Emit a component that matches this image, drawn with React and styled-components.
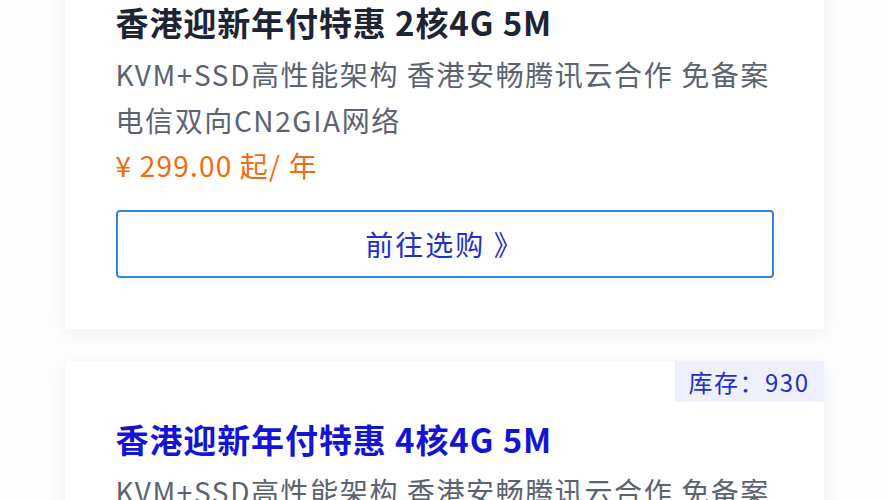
import styled, { createGlobalStyle } from 'styled-components';

const GlobalStyle = createGlobalStyle`
    html, body {
        margin: 0;
        padding: 0;
        background: #fdfdfe;
        font-family: "Noto Sans CJK SC", "Noto Sans", sans-serif;
        overflow: hidden;
    }
`;

const List = styled.div`
    display: flex;
    flex-direction: column;
    gap: 32px;
    width: 759px;
    margin: -56px auto 0;
`;

const Card = styled.div`
    position: relative;
    box-sizing: border-box;
    background: #fff;
    border-radius: 4px;
    padding: 60px 50px 51px 51px;
    box-shadow: 0 4px 18px rgba(30, 40, 90, 0.06);
`;

const Stock = styled.span`
    position: absolute;
    top: 0;
    right: 0;
    height: 41px;
    padding: 0 14px;
    display: flex;
    align-items: center;
    background: #eef0fd;
    color: #2330c0;
    font-size: 24px;
    letter-spacing: 1.5px;
`;

const Title = styled.h3`
    margin: 0 0 11px;
    font-size: 33px;
    line-height: 36px;
    font-weight: 700;
    letter-spacing: 0.9px;
    white-space: nowrap;
    color: ${(p) => (p.$active ? '#1414d6' : '#1d2433')};
`;

const Desc = styled.p`
    margin: 0;
    font-size: 28px;
    line-height: 46px;
    color: #5c6370;
    letter-spacing: 1.6px;
    white-space: nowrap;
`;

const Price = styled.div`
    font-size: 28px;
    line-height: 45px;
    color: #ed6d0f;
    letter-spacing: 1.2px;
`;

const BuyButton = styled.button`
    display: block;
    box-sizing: border-box;
    width: 100%;
    height: 68px;
    margin-top: 22px;
    background: #fff;
    border: 2px solid #2f86e6;
    border-radius: 4px;
    color: #2131c8;
    font-family: inherit;
    font-size: 28px;
    letter-spacing: 2px;
    cursor: pointer;
`;

const plans = [
    { name: '香港迎新年付特惠 2核4G 5M', price: '¥ 299.00 起/ 年' },
    { name: '香港迎新年付特惠 4核4G 5M', price: '¥ 399.00 起/ 年', stock: 930, active: true },
];

export default function App() {
    return (
        <>
            <GlobalStyle />
            <List>
                {plans.map((plan) => (
                    <Card key={plan.name}>
                        {plan.stock && <Stock>库存：{plan.stock}</Stock>}
                        <Title $active={plan.active}>{plan.name}</Title>
                        <Desc>
                            KVM+SSD高性能架构 香港安畅腾讯云合作 免备案
                            <br />
                            电信双向CN2GIA网络
                        </Desc>
                        <Price>{plan.price}</Price>
                        <BuyButton>前往选购 》</BuyButton>
                    </Card>
                ))}
            </List>
        </>
    );
}
